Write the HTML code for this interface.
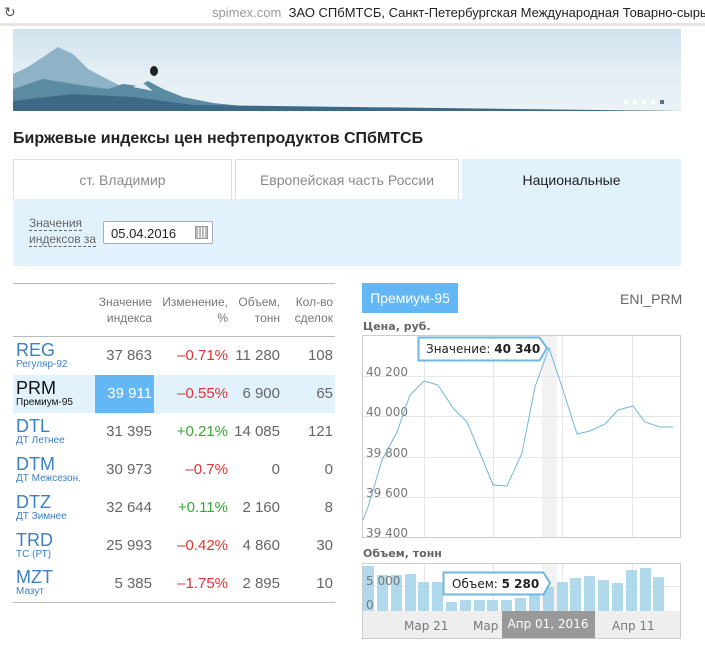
<!DOCTYPE html>
<html><head><meta charset="utf-8"><style>
*{margin:0;padding:0;box-sizing:border-box}
body{width:705px;height:652px;overflow:hidden;background:#fff;font-family:"Liberation Sans","DejaVu Sans",sans-serif;position:relative}
.abs{position:absolute}
.top{left:0;top:0;width:705px;height:26px;background:#fff;border-bottom:3px solid #e6e6e6}
.banner{left:13px;top:29px;width:668px;height:82px;background:linear-gradient(180deg,#cfe3ee 0%,#e3eef4 50%,#eaf2f6 100%);overflow:hidden}
h1{position:absolute;left:13px;top:130px;font-size:16px;font-weight:bold;color:#222}
.tab{top:159px;height:41px;border:1px solid #ddd;border-bottom:none;font-size:14px;color:#8a8a8a;text-align:center;line-height:40px;background:#fff}
.panel{left:13px;top:199px;width:668px;height:67px;background:#e2f2fc}
table{position:absolute;left:13px;top:283px;width:322px;border-collapse:collapse;border-top:1px solid #bbb;border-bottom:1px solid #bbb}
th{font-weight:normal;font-size:12px;color:#777;text-align:right;height:53px;vertical-align:middle;border-bottom:1px solid #bbb;padding-right:2px;line-height:16px}
td{height:38px;font-size:15px;color:#666;text-align:right;padding-right:2px}
td.n{text-align:left;padding-left:3px;color:#3a7fc8;font-size:18px;line-height:17px}
td.n small{display:block;font-size:10px;line-height:11px;color:#3a7fc8}
.r{color:#d33}.g{color:#3a3}
tr.sel{background:#e2f2fc}
tr.sel td.n,tr.sel td.n small{color:#111}
.lbl{font-size:11px;font-weight:bold;color:#666;font-family:"DejaVu Sans",sans-serif}
</style></head><body>
<div class="abs top">
<div class="abs" style="left:4px;top:4px;font-size:14px;color:#555">↻</div>
<div class="abs" style="left:212px;top:5px;font-size:13px;color:#222;white-space:nowrap"><span style="color:#999">spimex.com</span>&nbsp; ЗАО СПбМТСБ, Санкт-Петербургская Международная Товарно-сырьевая</div>
</div>
<div class="abs banner">
<svg width="668" height="82" style="position:absolute;left:0;top:0">
<polygon points="0,45 15,38 30,28 45,18 60,25 75,40 90,48 110,58 125,60 150,70 180,76 220,80 300,82 0,82" fill="#8fb3c6"/>
<polygon points="0,60 30,50 60,55 95,60 110,55 125,57 135,52 150,60 170,68 200,74 240,78 668,82 0,82" fill="#5b8aa3"/>
<polygon points="0,72 60,65 120,68 180,76 668,82 0,82" fill="#3c6a86"/>
<polygon points="120,58 130,54 140,62" fill="#e6eef2"/>
<ellipse cx="141" cy="42" rx="4" ry="5" fill="#222"/>
<rect x="611" y="71" width="4" height="4" fill="#fff"/><rect x="620" y="71" width="4" height="4" fill="#fff"/><rect x="629" y="71" width="4" height="4" fill="#fff"/><rect x="638" y="71" width="4" height="4" fill="#fff"/><rect x="647" y="71" width="4" height="4" fill="#57718a"/>
</svg></div>
<h1>Биржевые индексы цен нефтепродуктов СПбМТСБ</h1>
<div class="abs tab" style="left:13px;width:219px">ст. Владимир</div>
<div class="abs tab" style="left:235px;width:224px">Европейская часть России</div>
<div class="abs tab" style="left:462px;width:219px;background:#e2f2fc;border-color:#e2f2fc;color:#222">Национальные</div>
<div class="abs panel">
<div class="abs" style="left:16px;top:16px;font-size:12px;color:#666;line-height:16px"><span style="border-bottom:1px dashed #666">Значения</span><br><span style="border-bottom:1px dashed #666">индексов за</span></div>
<div class="abs" style="left:90px;top:22px;width:110px;height:23px;background:#fff;border:1px solid #aab;border-radius:2px;font-size:13px;color:#222;padding:4px 0 0 7px">05.04.2016
<div class="abs" style="right:4px;top:4px;width:13px;height:13px;border:1px solid #999;background:repeating-linear-gradient(90deg,#bbb 0 2px,#fff 2px 3px)"></div></div>
</div>
<table>
<tr><th style="width:82px"></th><th style="width:59px">Значение<br>индекса</th><th style="width:76px">Изменение,<br>%</th><th style="width:52px">Объем,<br>тонн</th><th>Кол-во<br>сделок</th></tr>
<tr><td class="n">REG<small>Регуляр-92</small></td><td>37 863</td><td class="r">–0.71%</td><td>11 280</td><td>108</td></tr>
<tr class="sel"><td class="n">PRM<small>Премиум-95</small></td><td style="background:#63b7f5;color:#fff">39 911</td><td class="r">–0.55%</td><td>6 900</td><td>65</td></tr>
<tr><td class="n">DTL<small>ДТ Летнее</small></td><td>31 395</td><td class="g">+0.21%</td><td>14 085</td><td>121</td></tr>
<tr><td class="n">DTM<small>ДТ Межсезон.</small></td><td>30 973</td><td class="r">–0.7%</td><td>0</td><td>0</td></tr>
<tr><td class="n">DTZ<small>ДТ Зимнее</small></td><td>32 644</td><td class="g">+0.11%</td><td>2 160</td><td>8</td></tr>
<tr><td class="n">TRD<small>ТС (РТ)</small></td><td>25 993</td><td class="r">–0.42%</td><td>4 860</td><td>30</td></tr>
<tr><td class="n">MZT<small>Мазут</small></td><td>5 385</td><td class="r">–1.75%</td><td>2 895</td><td>10</td></tr>
</table>
<div class="abs" style="left:362px;top:283px;width:96px;height:30px;background:#63b7f5;color:#fff;font-size:14px;line-height:30px;text-align:center">Премиум-95</div>
<div class="abs" style="left:620px;top:291px;font-size:14px;color:#666">ENI_PRM</div>
<div class="abs lbl" style="left:363px;top:320px">Цена, руб.</div>
<div class="abs lbl" style="left:363px;top:547px">Объем, тонн</div>
<svg class="abs" style="left:0;top:0" width="705" height="652">
<rect x="362.5" y="335.5" width="318" height="202" fill="#fff" stroke="#ccc"/>
<rect x="542" y="336" width="15" height="201" fill="#f2f2f2"/>
<g stroke="#e6e6e6"><line x1="363" y1="376.5" x2="680" y2="376.5"/><line x1="363" y1="416.5" x2="680" y2="416.5"/><line x1="363" y1="457.5" x2="680" y2="457.5"/><line x1="363" y1="497.5" x2="680" y2="497.5"/>
<line x1="424.5" y1="336" x2="424.5" y2="537"/><line x1="493.5" y1="336" x2="493.5" y2="537"/><line x1="562.5" y1="336" x2="562.5" y2="537"/><line x1="632.5" y1="336" x2="632.5" y2="537"/></g>
<g font-size="12" fill="#777" font-family="DejaVu Sans"><text x="366" y="376">40 200</text><text x="366" y="416">40 000</text><text x="366" y="457">39 800</text><text x="366" y="497">39 600</text><text x="366" y="537">39 400</text></g>
<polyline fill="none" stroke="#6fb7de" stroke-width="1" points="363,520 368,507 382,460 397,432 410,395 424,381 438,385 453,408 467,422 480,453 493,485 507,486 522,453 535,387 549,348 563,390 577,434 590,431 605,424 618,410 633,406 645,422 660,427 673,427"/>
<path d="M418.5,337.5 H539.5 L547,348 L539.5,360.5 H418.5 Z" fill="#fff" stroke="#6fb7de" stroke-width="2"/>
<text x="426" y="353" font-size="12" font-family="DejaVu Sans" fill="#222">Значение: <tspan font-weight="bold">40 340</tspan></text>
<rect x="362.5" y="563.5" width="318" height="75" fill="#fff" stroke="#ccc"/>
<rect x="363" y="611" width="317" height="27" fill="#eee"/>
<rect x="542" y="564" width="15" height="47" fill="#f2f2f2"/>
<g stroke="#e6e6e6"><line x1="363" y1="586.5" x2="680" y2="586.5"/><line x1="424.5" y1="564" x2="424.5" y2="611"/><line x1="493.5" y1="564" x2="493.5" y2="611"/><line x1="562.5" y1="564" x2="562.5" y2="611"/><line x1="632.5" y1="564" x2="632.5" y2="611"/></g>
<g fill="#a8d5ea" opacity="0.9">
<rect x="363" y="566" width="11" height="45"/><rect x="377" y="575" width="11" height="36"/><rect x="391" y="575" width="11" height="36"/><rect x="405" y="574" width="11" height="37"/><rect x="418" y="582" width="11" height="29"/><rect x="432" y="582" width="11" height="29"/><rect x="446" y="602" width="11" height="9"/><rect x="460" y="600" width="11" height="11"/><rect x="474" y="600" width="11" height="11"/><rect x="487" y="600" width="11" height="11"/><rect x="501" y="600" width="11" height="11"/><rect x="515" y="598" width="11" height="13"/><rect x="529" y="595" width="11" height="16"/><rect x="543" y="587" width="11" height="24"/><rect x="557" y="582" width="11" height="29"/><rect x="570" y="578" width="11" height="33"/><rect x="584" y="576" width="11" height="35"/><rect x="598" y="580" width="11" height="31"/><rect x="612" y="583" width="11" height="28"/><rect x="626" y="570" width="11" height="41"/><rect x="640" y="568" width="11" height="43"/><rect x="653" y="577" width="11" height="34"/>
</g>
<text x="366" y="585" font-size="12" font-family="DejaVu Sans" fill="#777">5 000</text>
<text x="366" y="609" font-size="12" font-family="DejaVu Sans" fill="#777">0</text>
<path d="M443.5,572.5 H543.5 L550,583 L543.5,594.5 H443.5 Z" fill="#fff" stroke="#6fb7de" stroke-width="2"/>
<text x="452" y="588" font-size="12" font-family="DejaVu Sans" fill="#222">Объем: <tspan font-weight="bold">5 280</tspan></text>
<text x="404" y="630" font-size="12" font-family="DejaVu Sans" fill="#777">Мар 21</text>
<text x="473" y="630" font-size="12" font-family="DejaVu Sans" fill="#777">Мар 2</text>
<text x="612" y="630" font-size="12" font-family="DejaVu Sans" fill="#777">Апр 11</text>
<rect x="502" y="611" width="93" height="27" fill="#999"/>
<text x="548" y="628" text-anchor="middle" font-size="12" font-family="DejaVu Sans" fill="#fff">Апр 01, 2016</text>
</svg>
</body></html>
